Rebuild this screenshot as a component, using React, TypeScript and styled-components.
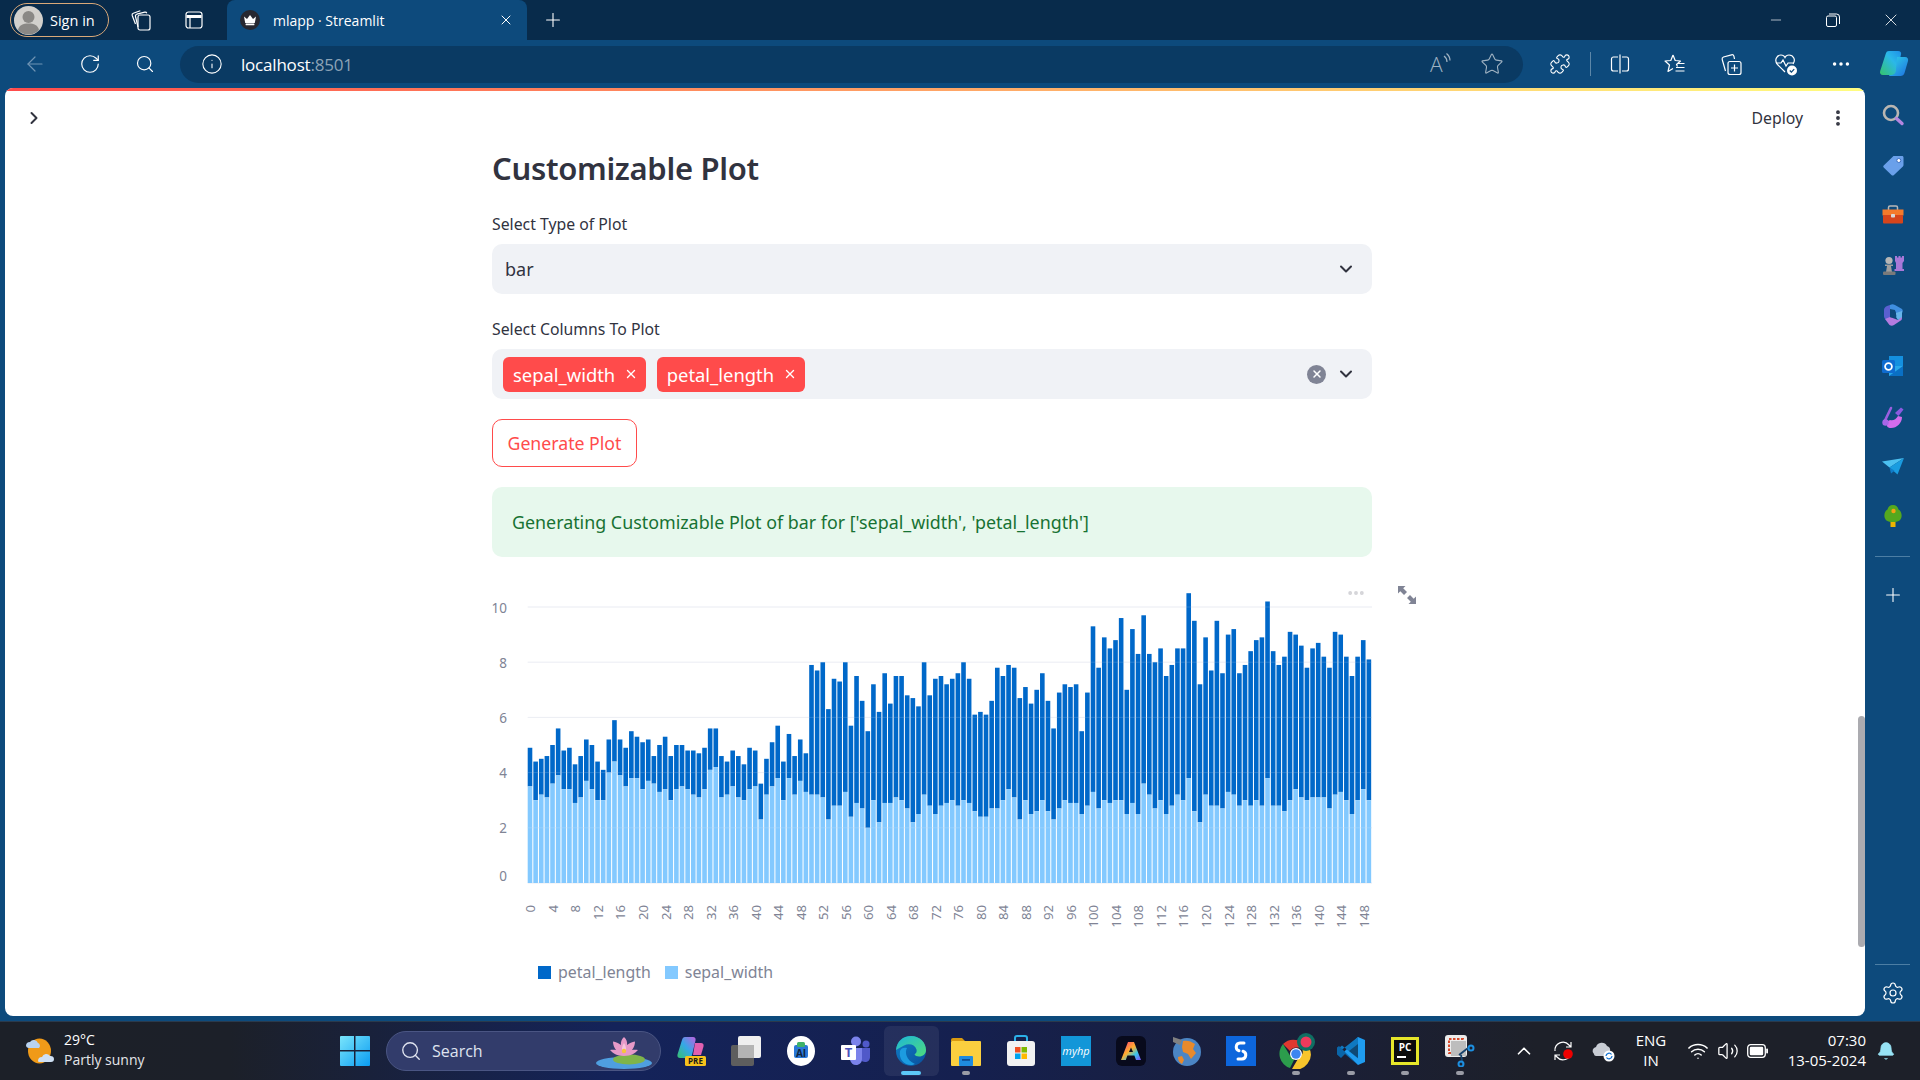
import React from 'react';
import styled, { createGlobalStyle } from 'styled-components';
import {
  ArrowLeft, RotateCw, Search, Info, Star, Puzzle, Plus, X, Minus, Ellipsis,
  ChevronDown, ChevronRight, ChevronUp, Wifi, Volume2, Bell, Settings, EllipsisVertical,
} from 'lucide-react';

// --- Data ---
const sepalWidth = [
  3.5, 3.0, 3.2, 3.1, 3.6, 3.9, 3.4, 3.4, 2.9, 3.1, 3.7, 3.4, 3.0, 3.0, 4.0, 4.4, 3.9, 3.5, 3.8, 3.8, 3.4, 3.7, 3.6, 3.3, 3.4,
  3.0, 3.4, 3.5, 3.4, 3.2, 3.1, 3.4, 4.1, 4.2, 3.1, 3.2, 3.5, 3.1, 3.0, 3.4, 3.5, 2.3, 3.2, 3.5, 3.8, 3.0, 3.8, 3.2, 3.7, 3.3,
  3.2, 3.2, 3.1, 2.3, 2.8, 2.8, 3.3, 2.4, 2.9, 2.7, 2.0, 3.0, 2.2, 2.9, 2.9, 3.1, 3.0, 2.7, 2.2, 2.5, 3.2, 2.8, 2.5, 2.8, 2.9,
  3.0, 2.8, 3.0, 2.9, 2.6, 2.4, 2.4, 2.7, 2.7, 3.0, 3.4, 3.1, 2.3, 3.0, 2.5, 2.6, 3.0, 2.6, 2.3, 2.7, 3.0, 2.9, 2.9, 2.5, 2.8,
  3.3, 2.7, 3.0, 2.9, 3.0, 3.0, 2.5, 2.9, 2.5, 3.6, 3.2, 2.7, 3.0, 2.5, 2.8, 3.2, 3.0, 3.8, 2.6, 2.2, 3.2, 2.8, 2.8, 2.7, 3.3,
  3.2, 2.8, 3.0, 2.8, 3.0, 2.8, 3.8, 2.8, 2.8, 2.6, 3.0, 3.4, 3.1, 3.0, 3.1, 3.1, 3.1, 2.7, 3.2, 3.3, 3.0, 2.5, 3.0, 3.4, 3.0,
];
const petalLength = [
  1.4, 1.4, 1.3, 1.5, 1.4, 1.7, 1.4, 1.5, 1.4, 1.5, 1.5, 1.6, 1.4, 1.1, 1.2, 1.5, 1.3, 1.4, 1.7, 1.5, 1.7, 1.5, 1.0, 1.7, 1.9,
  1.6, 1.6, 1.5, 1.4, 1.6, 1.6, 1.5, 1.5, 1.4, 1.5, 1.2, 1.3, 1.5, 1.3, 1.5, 1.3, 1.3, 1.3, 1.6, 1.9, 1.4, 1.6, 1.4, 1.5, 1.4,
  4.7, 4.5, 4.9, 4.0, 4.6, 4.5, 4.7, 3.3, 4.6, 3.9, 3.5, 4.2, 4.0, 4.7, 3.6, 4.4, 4.5, 4.1, 4.5, 3.9, 4.8, 4.0, 4.9, 4.7, 4.3,
  4.4, 4.8, 5.0, 4.5, 3.5, 3.8, 3.7, 3.9, 5.1, 4.5, 4.5, 4.7, 4.4, 4.1, 4.0, 4.4, 4.6, 4.0, 3.3, 4.2, 4.2, 4.2, 4.3, 3.0, 4.1,
  6.0, 5.1, 5.9, 5.6, 5.8, 6.6, 4.5, 6.3, 5.8, 6.1, 5.1, 5.3, 5.5, 5.0, 5.1, 5.3, 5.5, 6.7, 6.9, 5.0, 5.7, 4.9, 6.7, 4.9, 5.7,
  6.0, 4.8, 4.9, 5.6, 5.8, 6.1, 6.4, 5.6, 5.1, 5.6, 6.1, 5.6, 5.5, 4.8, 5.4, 5.6, 5.1, 5.1, 5.9, 5.7, 5.2, 5.0, 5.2, 5.4, 5.1,
];

const CHART_X0 = 35.7;
const CHART_STEP = 5.63;
const CHART_Y0 = 306;
const CHART_UNIT = 27.6;
const yTicks = [10, 8, 6, 4, 2];

// --- Global ---
const GlobalStyle = createGlobalStyle`
  html, body { margin: 0; padding: 0; }
  body { font-family: "Noto Sans", "Liberation Sans", sans-serif; }
  * { box-sizing: border-box; }
`;

// --- Browser chrome ---
const Screen = styled.div`
  width: 1920px;
  height: 1080px;
  overflow: hidden;
  display: flex;
  flex-direction: column;
  background: #0d4a7c;
`;

const TitleBar = styled.div`
  height: 40px;
  display: flex;
  align-items: center;
  background: #082b4b;
  color: #fff;
  font-family: "Open Sans", sans-serif;
  font-size: 14px;
`;

const SignIn = styled.div`
  width: 99px;
  height: 34px;
  margin-left: 10px;
  padding-left: 3px;
  display: flex;
  align-items: center;
  gap: 7px;
  border: 1px solid #d9a878;
  border-radius: 17px;
  font-size: 14.5px;
`;

const BarSlot = styled.div<{ $w?: number; $pl?: number }>`
  width: ${({ $w }) => $w ?? 55}px;
  height: 100%;
  padding-left: ${({ $pl }) => $pl ?? 0}px;
  flex: none;
  display: flex;
  align-items: center;
  justify-content: center;
  color: #fff;
`;

const TabSpacer = styled.div`
  width: 5px;
  flex: none;
`;

const Tab = styled.div`
  width: 300px;
  height: 40px;
  margin-left: 7px;
  padding: 0 13px;
  display: flex;
  align-items: center;
  background: #0d4a7c;
  border-radius: 8px 8px 0 0;
`;

const Favicon = styled.div`
  width: 20px;
  height: 20px;
  border-radius: 50%;
  background: #262730;
  display: flex;
  align-items: center;
  justify-content: center;
  flex: none;
`;

const TabTitle = styled.span`
  flex: 1;
  margin-left: 13px;
`;

const Grow = styled.div`
  flex: 1;
`;

const NavBar = styled.div`
  height: 48px;
  padding-left: 7px;
  display: flex;
  align-items: center;
`;

const AddressBar = styled.div`
  width: 1343px;
  height: 37px;
  margin-left: 8px;
  padding: 0 19px 0 21px;
  display: flex;
  align-items: center;
  gap: 26px;
  border-radius: 19px;
  background: #0a3a63;
  color: #fff;
`;

const Url = styled.div`
  flex: 1;
  margin-left: -8px;
  font-family: "Open Sans", sans-serif;
  font-size: 17px;
  letter-spacing: -0.2px;
  span { color: #8ca3b6; }
`;

const ReadAloudWrap = styled.div`
  width: 24px;
  height: 24px;
  display: flex;
  align-items: flex-start;
  flex: none;
`;

const ReadLetter = styled.span`
  height: 24px;
  font-family: "Open Sans", sans-serif;
  font-size: 21px;
  font-weight: 300;
  line-height: 25px;
  color: #9fb2c2;
`;

const NavDivider = styled.div`
  width: 1px;
  height: 24px;
  flex: none;
  margin: 0 1px 0 2px;
  background: #5d87a8;
`;

const Middle = styled.div`
  height: 928px;
  display: flex;
`;

const Page = styled.div`
  position: relative;
  width: 1860px;
  margin-left: 5px;
  overflow: hidden;
  background: #fff;
  border-radius: 8px;
  color: #31333f;
`;

const Rainbow = styled.div`
  height: 3px;
  background: linear-gradient(90deg, #ff4b4b, #fffd80);
`;

const PageHeader = styled.div`
  height: 54px;
  padding: 0 17px 0 19px;
  display: flex;
  align-items: center;
  justify-content: space-between;
`;

const HeaderActions = styled.div`
  display: flex;
  align-items: center;
  gap: 25px;
  font-size: 15.8px;
`;

const ScrollThumb = styled.div`
  position: absolute;
  top: 628px;
  right: 0;
  width: 7px;
  height: 231px;
  border-radius: 4px;
  background: #ababb0;
`;

// --- Streamlit content ---
const Main = styled.main`
  width: 880px;
  margin-left: 487px;
  display: flex;
  flex-direction: column;
  gap: 20px;
`;

const Title = styled.h1`
  margin: 0;
  height: 47px;
  font-size: 31px;
  line-height: 47px;
  font-weight: 600;
  letter-spacing: -0.32px;
`;

const Field = styled.div<{ $mb?: number }>`
  margin-bottom: ${({ $mb }) => $mb ?? 0}px;
`;

const Label = styled.div`
  height: 24px;
  margin-bottom: 8px;
  font-size: 15.8px;
  line-height: 24px;
`;

const SelectBox = styled.div<{ $pl: number }>`
  height: 50px;
  padding: 0 16px 0 ${({ $pl }) => $pl}px;
  display: flex;
  align-items: center;
  border-radius: 10px;
  background: #f0f2f6;
  font-size: 18px;
`;

const Tag = styled.div`
  height: 35px;
  margin-right: 10.5px;
  padding: 0 8px 0 10px;
  display: flex;
  align-items: center;
  gap: 9px;
  border-radius: 6px;
  background: #ff4b4b;
  color: #fff;
  font-size: 18.4px;
`;

const ClearDot = styled.div`
  width: 19px;
  height: 19px;
  margin-right: 10px;
  display: flex;
  align-items: center;
  justify-content: center;
  border-radius: 50%;
  background: #808495;
  color: #fff;
`;

const Button = styled.button`
  width: 145px;
  height: 48px;
  padding: 0;
  border: 1px solid #ff4b4b;
  border-radius: 10px;
  background: #fff;
  color: #ff4b4b;
  font-family: inherit;
  font-size: 17.7px;
`;

const Alert = styled.div`
  height: 70px;
  padding-left: 20px;
  display: flex;
  align-items: center;
  border-radius: 10px;
  background: #e7f8ed;
  color: #177233;
  font-size: 17.85px;
`;

const ChartWrap = styled.div`
  position: relative;
`;

const ChartSvg = styled.svg`
  display: block;
  font-family: "Noto Sans", sans-serif;
`;

const ChartDots = styled.div`
  position: absolute;
  top: 6px;
  left: 854px;
  color: #d4d4d8;
  display: flex;
`;

const ExpandButton = styled.div`
  position: absolute;
  top: 9px;
  left: 906px;
  display: flex;
`;

const Legend = styled.div`
  margin-left: 46px;
  display: flex;
  align-items: center;
  font-size: 15.9px;
  color: #808495;
`;

const Swatch = styled.div<{ $color: string }>`
  width: 13px;
  height: 13px;
  margin-right: 7px;
  background: ${({ $color }) => $color};
`;

const LegendName = styled.span`
  margin-right: 14px;
`;

// --- Edge sidebar ---
const SideBar = styled.div`
  width: 55px;
  padding-top: 2px;
  display: flex;
  flex-direction: column;
  align-items: center;
`;

const SideItem = styled.div<{ $h?: number }>`
  height: ${({ $h }) => $h ?? 50.1}px;
  flex: none;
  display: flex;
  align-items: center;
  justify-content: center;
  color: #fff;
`;

const SideRule = styled.div<{ $mt: number; $mb: number }>`
  width: 35px;
  height: 1px;
  margin: ${({ $mt }) => $mt}px 0 ${({ $mb }) => $mb}px;
  flex: none;
  background: #4c7ea4;
`;

// --- Taskbar ---
const Taskbar = styled.div`
  height: 59px;
  margin-top: 5px;
  padding-left: 25px;
  display: flex;
  align-items: center;
  border-top: 1px solid #2a3a4c;
  background: linear-gradient(90deg, #1c2028 0%, #1c2029 12%, #14235a 32%, #15204f 50%, #1a1f38 68%, #1d2029 80%, #1d2029 100%);
  color: #fff;
  font-family: "Open Sans", sans-serif;
  font-size: 15px;
`;

const Weather = styled.div`
  width: 315px;
  flex: none;
  display: flex;
  align-items: center;
  gap: 9px;
`;

const WeatherText = styled.div`
  padding-bottom: 3px;
  font-size: 14px;
  line-height: 20px;
  span { display: block; color: #e4e6ea; }
`;

const StartSlot = styled.div`
  width: 30px;
  flex: none;
  display: flex;
`;

const SearchPill = styled.div`
  width: 275px;
  height: 40px;
  margin: 0 3px 0 16px;
  padding: 0 8px 0 13px;
  flex: none;
  display: flex;
  align-items: center;
  border: 1px solid #4a5583;
  border-radius: 20px;
  background: #323c6b;
  font-size: 16px;
  color: #dfe3ef;
`;

const SearchLabel = styled.span`
  flex: 1;
  margin-left: 10px;
`;

const AppSlot = styled.div<{ $state?: 'dot' | 'active' }>`
  position: relative;
  width: 54.93px;
  height: 50px;
  flex: none;
  display: flex;
  align-items: center;
  justify-content: center;
  border-radius: 6px;
  background: ${({ $state }) => ($state === 'active' ? 'rgba(255,255,255,0.07)' : 'transparent')};
  &::after {
    content: '';
    display: ${({ $state }) => ($state ? 'block' : 'none')};
    position: absolute;
    bottom: 1px;
    left: 50%;
    transform: translateX(-50%);
    width: ${({ $state }) => ($state === 'active' ? 20 : 8)}px;
    height: 4px;
    border-radius: 2px;
    background: ${({ $state }) => ($state === 'active' ? '#5cc8f8' : '#9a9ca6')};
  }
`;

const Tray = styled.div`
  margin-left: auto;
  padding-right: 24px;
  display: flex;
  align-items: center;
`;

const TraySlot = styled.div<{ $w: number }>`
  width: ${({ $w }) => $w}px;
  display: flex;
  justify-content: center;
  color: #fff;
`;

const Lang = styled.div`
  width: 54px;
  padding-bottom: 2px;
  text-align: center;
  line-height: 20px;
`;

const Clock = styled.div`
  width: 93px;
  margin-right: 10px;
  padding-bottom: 2px;
  text-align: right;
  line-height: 20px;
`;

// --- Icons ---
const Avatar = () => (
  <svg width="29" height="29" viewBox="0 0 29 29">
    <circle cx="14.5" cy="14.5" r="14.5" fill="#d2d0cc" />
    <circle cx="14.5" cy="11" r="6" fill="#8a8885" />
    <path d="M4 24c1-5 5-6.5 10.5-6.5S24 19 25 24a14.5 14.5 0 0 1-21 0z" fill="#8a8885" />
  </svg>
);
const Workspaces = () => (
  <svg width="22" height="22" viewBox="0 0 22 22" fill="none" stroke="#fff" strokeWidth="1.2">
    <rect x="8" y="6" width="12" height="15" rx="2" />
    <path d="M8 18 5.5 7.5c-.3-1 .3-2 1.3-2.3l8-2c1-.2 1.7.2 2 1" />
    <path d="M5.5 15 2.2 6.5c-.3-1 .2-2 1.1-2.3l7-2.5" />
  </svg>
);
const TabsIcon = () => (
  <svg width="18" height="18" viewBox="0 0 18 18" fill="none" stroke="#fff" strokeWidth="1.2">
    <rect x="1" y="1" width="16" height="16" rx="2.5" />
    <path d="M1.5 5.5h15" strokeWidth="3" />
    <path d="M5 5v12" />
  </svg>
);
const Crown = () => (
  <svg width="14" height="12" viewBox="0 0 14 12" fill="#fff">
    <path d="M1 2.5 4 5l3-4 3 4 3-2.5-1.2 6.5H2.2z" />
    <rect x="2.6" y="9.6" width="8.8" height="1.6" rx=".5" />
  </svg>
);
const RestoreIcon = () => (
  <svg width="14" height="14" viewBox="0 0 14 14" fill="none" stroke="#fff" strokeWidth="1">
    <rect x=".5" y="3" width="10" height="10.5" rx="1.5" />
    <path d="M3 1h7.5a3 3 0 0 1 3 3v7" />
  </svg>
);
const ReadAloud = () => (
  <ReadAloudWrap>
    <ReadLetter>A</ReadLetter>
    <svg width="10" height="14" viewBox="0 0 10 14" fill="none" stroke="#9fb2c2" strokeWidth="1.2">
      <path d="M1 4c2 1.500 3 3.500 3 6M3.500 1.500c2.500 2 3.500 4.500 3.500 7" />
    </svg>
  </ReadAloudWrap>
);
const SplitIcon = () => (
  <svg width="22" height="22" viewBox="0 0 22 22" fill="none" stroke="#fff" strokeWidth="1.2">
    <path d="M9 4H4.500A2 2 0 0 0 2.500 6v10a2 2 0 0 0 2 2H9M13 4h4.500a2 2 0 0 1 2 2v10a2 2 0 0 1-2 2H13" />
    <path d="M11 1.500v19" />
  </svg>
);
const FavoritesIcon = () => (
  <svg width="24" height="24" viewBox="0 0 24 24" fill="none" stroke="#fff" strokeWidth="1.2" strokeLinejoin="round">
    <path d="M10 3l2.200 5.500 5.300.5-4 3.500 1 2M10 3 7.800 8.500 2 9l4.500 4-1.500 6.500 5-3" />
    <path d="M14 11.500h7.500M13 15.500h8.500M12.500 19h9" />
  </svg>
);
const CollectionsIcon = () => (
  <svg width="24" height="24" viewBox="0 0 24 24" fill="none" stroke="#fff" strokeWidth="1.2">
    <rect x="9" y="9.500" width="13" height="13" rx="2" />
    <path d="M15.500 12.500v7M12 16h7" />
    <path d="M6.500 19 3.200 7.500c-.3-1.100.3-2.100 1.300-2.500l8-2.200c1.100-.3 2.100.3 2.400 1.300L15.500 7" />
  </svg>
);
const HealthIcon = () => (
  <svg width="26" height="26" viewBox="0 0 26 26" fill="none" stroke="#fff" strokeWidth="1.2">
    <path d="M12 21 4.500 13.500C1 9.500 3.500 4 8 4c2 0 3.300 1 4 2.500C12.700 5 14 4 16 4c4.500 0 7 5 4 9" />
    <path d="M3 12h5l2-3 3 6 2-3h6" />
    <circle cx="19" cy="19.500" r="5" fill="#fff" stroke="none" />
    <path d="m16.800 19.500 1.600 1.600 2.800-3" stroke="#0d4a7c" strokeWidth="1.300" />
  </svg>
);
const CopilotLogo = () => (
  <svg width="32" height="32" viewBox="0 0 32 32">
    <defs>
      <linearGradient id="copA" x1="0" y1="0" x2="1" y2="1">
        <stop offset="0" stopColor="#2fd6e8" /><stop offset="1" stopColor="#1f6fe0" />
      </linearGradient>
      <linearGradient id="copB" x1="0" y1="1" x2="1" y2="0">
        <stop offset="0" stopColor="#35c46a" /><stop offset=".6" stopColor="#2bb8e8" /><stop offset="1" stopColor="#1e90e8" />
      </linearGradient>
    </defs>
    <path d="M11 3h9c2.500 0 3.500 1.500 3 3.500L19 24c-.5 2-2 3-4 3H5c-2.500 0-3.500-2-2.800-4L7.500 6.500C8.200 4 9 3 11 3z" fill="url(#copB)" />
    <path d="M19 9h8c2.500 0 3.600 2 3 4l-3.500 12c-.6 2-2 3-4 3H12c-2 0-1-1 1-1 2.500 0 4-1 4.800-3.500z" fill="url(#copA)" />
  </svg>
);

// sidebar icons
const SearchColor = () => (
  <svg width="24" height="24" viewBox="0 0 24 24" fill="none">
    <circle cx="10" cy="10" r="7" stroke="#b9b6b2" strokeWidth="2.600" />
    <path d="m15.500 15.500 5.500 5" stroke="#b486e0" strokeWidth="3.400" strokeLinecap="round" />
  </svg>
);
const TagColor = () => (
  <svg width="24" height="24" viewBox="0 0 24 24">
    <path d="M13 3h8c1 0 1.500.6 1.500 1.500V12c0 .6-.2 1-.6 1.400l-9.200 8.800c-.6.500-1.400.5-2 0l-8-7.700c-.6-.6-.6-1.500 0-2L12 3.400c.3-.2.600-.4 1-.4z" fill="#6aa0ea" />
    <circle cx="17.800" cy="7.500" r="2" fill="#fff" stroke="#3e6fc0" />
  </svg>
);
const Toolbox = () => (
  <svg width="24" height="24" viewBox="0 0 24 24">
    <path d="M7.500 7V4.500c0-1 .5-1.500 1.500-1.500h6c1 0 1.500.5 1.500 1.500V7" fill="none" stroke="#b8b8b8" strokeWidth="1.500" />
    <rect x="1.500" y="6.500" width="21" height="6" fill="#f47a2b" />
    <rect x="2" y="12" width="20" height="8.500" rx="1" fill="#d6451c" />
    <rect x="10" y="11" width="4" height="3.500" rx=".8" fill="#d8d8d8" />
  </svg>
);
const Chess = () => (
  <svg width="24" height="24" viewBox="0 0 24 24">
    <path d="M14 3h2v1.500h1.500V3h2v1.500H21V3h2v5l-1.500 2v6H23v2h-9.500v-2h1.500v-6L14 8z" fill="#a778d8" />
    <circle cx="8" cy="7.500" r="3.600" fill="#b6b6b6" />
    <path d="M4 11.500h8v1.500H10l1 6H5l1-6H4z" fill="#9e9e9e" />
    <rect x="2" y="18.500" width="12.500" height="3.500" rx="1" fill="#7a7a7a" />
  </svg>
);
const M365 = () => (
  <svg width="24" height="24" viewBox="0 0 24 24">
    <path d="M9 2c2-1 3-1 5 0l7 4c1 1 1 3 0 4l-6 1-1-4-5-1z" fill="#3f8fe0" />
    <path d="M3 7c0-2 1-3 3-4l3-1v16l-3-1c-2-1-3-2-3-4z" fill="#5a5fd0" />
    <path d="M4 16l5-2 8 3 4-5v2c0 2 0 3-2 4l-6 4c-1.500 1-3 1-4.500 0z" fill="#b47be0" />
    <path d="M15 10l6-2v6l-4 3-2-3z" fill="#66b5ea" />
    <path d="M9.500 9.500 14.500 8.500l1 5-6 1z" fill="#0d4a7c" />
  </svg>
);
const Outlook = () => (
  <svg width="24" height="24" viewBox="0 0 24 24">
    <rect x="8" y="2" width="14" height="10" fill="#1490df" />
    <path d="M8 12h14v10H8z" fill="#28a8ea" />
    <path d="m8 22 14-10v10z" fill="#0a70c4" />
    <rect x="1" y="6" width="13" height="13" rx="1.500" fill="#0f6cd0" />
    <circle cx="7.500" cy="12.500" r="3.400" fill="none" stroke="#fff" strokeWidth="1.800" />
  </svg>
);
const Brush = () => (
  <svg width="24" height="24" viewBox="0 0 24 24">
    <path d="M3.500 17.500 10 4" stroke="#9a5fe0" strokeWidth="2.600" strokeLinecap="round" />
    <path d="M6 22c-1-3 0-5 3-6 3 1 6-.5 8-4l4 1c0 6-5 11-11 11-2 0-3.500-.6-4-2z" fill="#d46cec" />
    <circle cx="4.500" cy="18.500" r="3.200" fill="#a866e8" />
    <path d="m14 9 6-5.500 2.500 2-5 6.500z" fill="#8a5ae0" />
  </svg>
);
const Plane = () => (
  <svg width="24" height="24" viewBox="0 0 24 24">
    <path d="M1 7.500 23 4 8.500 13.500z" fill="#4cc0f0" />
    <path d="M23 4 8.500 13.500l8 7z" fill="#1a9ce0" />
    <path d="m8.500 13.500 1.500 6 3.500-2.800z" fill="#0f7cc8" />
  </svg>
);
const Tree = () => (
  <svg width="24" height="24" viewBox="0 0 24 24">
    <rect x="9.500" y="17" width="5" height="6" fill="#eeb500" />
    <path d="M12 1c3 0 5 2 5.500 4.500C20 7 21 10 20.500 13c-.5 3-3 5-8.500 5s-8-2-8.500-5C3 10 4 7 6.500 5.500 7 3 9 1 12 1z" fill="#54a81e" />
    <circle cx="12.500" cy="7" r="2.200" fill="#f2a214" />
  </svg>
);

// taskbar icons
const WeatherIcon = () => (
  <svg width="30" height="30" viewBox="0 0 30 30">
    <ellipse cx="14.500" cy="15" rx="11.500" ry="12.500" fill="#f09a18" />
    <path d="M1 10a4 4 0 0 1 4-4 4.500 4.500 0 0 1 8 1 3 3 0 0 1 1 5H4a3 3 0 0 1-3-2z" fill="#b8d2f0" />
    <path d="M13 25a4 4 0 0 1 4-4 4.500 4.500 0 0 1 8-1 3.200 3.200 0 0 1 4 3c0 2-1 3-3 3H15c-1.500 0-2-.5-2-1z" fill="#cfe0f4" />
  </svg>
);
const StartLogo = () => (
  <svg width="30" height="30" viewBox="0 0 30 30">
    <defs>
      <linearGradient id="winA" x1="0" y1="0" x2="1" y2="1">
        <stop offset="0" stopColor="#7ae5fb" /><stop offset="1" stopColor="#0a9cf2" />
      </linearGradient>
    </defs>
    <path d="M0 1a1 1 0 0 1 1-1h13v14H0zM15.500 0H29a1 1 0 0 1 1 1v13H15.500zM0 15.500h14V30H1a1 1 0 0 1-1-1zM15.500 15.500H30V29a1 1 0 0 1-1 1H15.500z" fill="url(#winA)" />
  </svg>
);
const Lotus = () => (
  <svg width="56" height="36" viewBox="0 0 56 36">
    <ellipse cx="28" cy="30" rx="28" ry="6" fill="#4f9fe0" />
    <ellipse cx="33" cy="26.500" rx="16" ry="5" fill="#7fb44a" />
    <path d="M28 4c2.500 2 3.500 5 3 8 2.500-2 5-3 8-3.500 0 3-1 6-3 8.500 2-.5 4-.5 6 0-2.500 3-7 6-14 6s-11.500-3-14-6c2-.5 4-.5 6 0-2-2.500-3-5.500-3-8.500 3 .5 5.500 1.500 8 3.500-.5-3 .5-6 3-8z" fill="#e79ac8" />
    <path d="M28 10c1.800 2.500 2.500 6 1.800 9h-3.600c-.7-3 0-6.500 1.800-9z" fill="#f5c6dc" />
    <circle cx="28" cy="18" r="2.200" fill="#f6c43c" />
  </svg>
);
const CopilotPre = () => (
  <svg width="32" height="32" viewBox="0 0 32 32">
    <defs>
      <linearGradient id="copT" x1="0" y1="1" x2="1" y2="0">
        <stop offset="0" stopColor="#36c06e" /><stop offset=".5" stopColor="#35a8e8" /><stop offset="1" stopColor="#c05fe0" />
      </linearGradient>
    </defs>
    <path d="M10 2h8c2 0 3 1.500 2.500 3.500L17 20c-.5 2-2 3-4 3H5c-2 0-3-1.500-2.500-3.500L7 5c.5-2 1.500-3 3-3z" fill="url(#copT)" />
    <path d="M20 8h6c2 0 3 1.500 2.500 3.500L26 20h-8z" fill="#e060b0" />
    <rect x="10" y="21" width="21" height="10" rx="1.500" fill="#f6c21c" />
    <text x="20.500" y="29" fontSize="8" fontWeight="700" textAnchor="middle" fill="#1a1a1a" fontFamily="Open Sans, sans-serif">PRE</text>
  </svg>
);
const TaskView = () => (
  <svg width="32" height="32" viewBox="0 0 32 32">
    <rect x="1" y="10" width="23" height="21" rx="2" fill="#5e5e5e" />
    <rect x="8" y="1" width="23" height="22" rx="2" fill="#efefef" />
    <rect x="8" y="10" width="16" height="13" fill="#b4b4b4" />
  </svg>
);
const AiCircle = () => (
  <svg width="28" height="30" viewBox="0 0 28 30">
    <ellipse cx="14" cy="15" rx="14" ry="15" fill="#fff" />
    <rect x="7" y="9" width="14" height="13" rx="2" fill="#2a78d8" />
    <rect x="10" y="6" width="8" height="5" rx="1.500" fill="#3fb26a" />
    <text x="14" y="20.500" fontSize="10" fontWeight="700" textAnchor="middle" fill="#10243e" fontFamily="Open Sans, sans-serif">AI</text>
  </svg>
);
const Teams = () => (
  <svg width="30" height="30" viewBox="0 0 30 30">
    <circle cx="15" cy="5.500" r="5" fill="#7b83eb" />
    <circle cx="25" cy="8" r="3.500" fill="#5059c9" />
    <path d="M20 12h9v9c0 3-2 5-5 5-2 0-3-1-4-2z" fill="#5059c9" />
    <path d="M9 12h12v11c0 3.500-2.500 6-6 6-3 0-5-2-6-5z" fill="#7b83eb" />
    <rect x="0" y="9" width="15" height="15" rx="1" fill="#fff" />
    <text x="7.500" y="21" fontSize="13" fontWeight="700" textAnchor="middle" fill="#4b53bc" fontFamily="Open Sans, sans-serif">T</text>
  </svg>
);
const EdgeLogo = () => (
  <svg width="32" height="32" viewBox="0 0 32 32">
    <defs>
      <linearGradient id="edgeG" x1="0" y1="0" x2="1" y2="1">
        <stop offset="0" stopColor="#1db5d8" /><stop offset="1" stopColor="#4fdc7c" />
      </linearGradient>
      <linearGradient id="edgeB" x1="0" y1="0" x2="1" y2="1">
        <stop offset="0" stopColor="#0f7fc8" /><stop offset="1" stopColor="#0a4f9c" />
      </linearGradient>
    </defs>
    <circle cx="16" cy="16" r="15" fill="url(#edgeB)" />
    <path d="M1 15C2 6 8 1 16 1c9 0 15 6.500 15 14 0 4-3 6.500-7 6.500-2 0-4-.8-4.500-2 2-1.500 2.500-3 2-5C20 9.500 14 8 9 10.500 5 12.500 2.500 14 1 15z" fill="url(#edgeG)" />
    <path d="M12 13c-2.500 4-1 12 8 16-1 .5-2.500 1-4 1C9 30 3.500 24 5 16c1-3 4-4 7-3z" fill="#1c9be0" />
  </svg>
);
const Explorer = () => (
  <svg width="32" height="32" viewBox="0 0 32 32">
    <path d="M1 5a2 2 0 0 1 2-2h9l3 3h-14z" fill="#d99a10" />
    <rect x="1" y="6" width="30" height="25" rx="1" fill="#fbcf3f" />
    <rect x="9" y="21" width="14" height="10" rx="1" fill="#1f8be0" />
    <rect x="12" y="24" width="8" height="1.800" fill="#0f4f94" />
  </svg>
);
const StoreLogo = () => (
  <svg width="30" height="32" viewBox="0 0 30 32">
    <path d="M9 6V3a2 2 0 0 1 2-2h8a2 2 0 0 1 2 2v3" fill="none" stroke="#2bb0e8" strokeWidth="2" />
    <rect x="1" y="6" width="28" height="25" rx="3" fill="#f2f2f2" />
    <rect x="9" y="12" width="5.500" height="5.500" fill="#f25022" />
    <rect x="15.500" y="12" width="5.500" height="5.500" fill="#7fba00" />
    <rect x="9" y="18.500" width="5.500" height="5.500" fill="#00a4ef" />
    <rect x="15.500" y="18.500" width="5.500" height="5.500" fill="#ffb900" />
  </svg>
);
const MyHp = () => (
  <svg width="30" height="30" viewBox="0 0 30 30">
    <rect width="30" height="30" fill="#1296d8" />
    <text x="15" y="19" fontSize="11" fontStyle="italic" textAnchor="middle" fill="#fff" fontFamily="Open Sans, sans-serif">myhp</text>
  </svg>
);
const AdobeExpress = () => (
  <svg width="30" height="30" viewBox="0 0 30 30">
    <defs>
      <linearGradient id="adobeG" x1="0" y1="0" x2="1" y2="1">
        <stop offset="0" stopColor="#ff2f7a" /><stop offset=".45" stopColor="#ffb02e" /><stop offset=".7" stopColor="#38c8e8" /><stop offset="1" stopColor="#7c4dff" />
      </linearGradient>
    </defs>
    <rect width="30" height="30" rx="6" fill="#080a1c" />
    <path d="M12 6h6l7 18h-5l-1.600-4.500h-7L9.800 24H5z" fill="url(#adobeG)" />
    <path d="M15 11.500 13 16h4z" fill="#080a1c" />
  </svg>
);
const GlobeApp = () => (
  <svg width="30" height="32" viewBox="0 0 30 32">
    <circle cx="16" cy="17" r="14" fill="#4b85c4" />
    <path d="M12 6c4-1 8 0 12 3l-2 5 3 4-5 6-3-5-5-2-1-5zM7 22l4-1 2 4-2 4c-2-1-4-3-4-7z" fill="#e88a2c" />
    <path d="M2 2l9 3-2 5-7-3z" fill="#808080" />
  </svg>
);
const SApp = () => (
  <svg width="30" height="30" viewBox="0 0 30 30">
    <rect width="30" height="30" fill="#0d66dc" />
    <path d="M18 7h-4a4 4 0 0 0-1 7.800" fill="none" stroke="#fff" strokeWidth="3" strokeLinecap="round" />
    <path d="M12 23h4a4 4 0 0 0 1-7.800" fill="none" stroke="#fff" strokeWidth="3" strokeLinecap="round" />
  </svg>
);
const ChromeWithBadge = () => (
  <svg width="40" height="36" viewBox="-4 0 40 36">
    <path d="M16 7a15 15 0 0 1 13 7.500H16a7 7 0 0 0-6 3.500L3 11A15 15 0 0 1 16 7z" fill="#e0392f" />
    <path d="M3 11l7 11.500a7 7 0 0 0 6 .5L10 35A15 15 0 0 1 3 11z" fill="#2c9c4c" />
    <path d="M29 14.500A15 15 0 0 1 12 36l6.500-11a7 7 0 0 0 3-10.500z" fill="#f8c52c" />
    <circle cx="16" cy="21" r="6" fill="#fff" />
    <circle cx="16" cy="21" r="4.800" fill="#3d86f0" />
    <circle cx="26" cy="9" r="9" fill="#0f6f63" />
    <circle cx="26" cy="9" r="5.500" fill="#ee3a5c" />
  </svg>
);
const VsCode = () => (
  <svg width="30" height="30" viewBox="0 0 30 30">
    <path d="M22 1 29 4v22l-7 3L8 16z" fill="#1f9cf0" />
    <path d="M22 1 3 16l-2-1.500v-1L6 9.500l16 13z" fill="#0f78c0" />
    <path d="M22 29 3 10 1 11.500v7l4 3.500 4-4z" fill="#0a65a8" />
    <path d="M22 8v14l-9-7z" fill="#0d2a44" opacity=".6" />
  </svg>
);
const PyCharm = () => (
  <svg width="28" height="28" viewBox="0 0 28 28">
    <rect width="28" height="28" fill="#e6e62a" />
    <rect x="3" y="3" width="22" height="22" fill="#0c0c0c" />
    <text x="14" y="14" fontSize="10" fontWeight="700" textAnchor="middle" fill="#fff" fontFamily="Open Sans, sans-serif">PC</text>
    <rect x="6" y="19" width="9" height="2" fill="#fff" />
  </svg>
);
const SnipTool = () => (
  <svg width="30" height="32" viewBox="0 0 30 32">
    <rect x="0" y="0" width="22" height="22" rx="3" fill="#ececec" />
    <rect x="4" y="4" width="14" height="14" fill="none" stroke="#d8492a" strokeWidth="2" strokeDasharray="2.500 1.500" />
    <rect x="6" y="6" width="15" height="15" fill="#bdbdbd" />
    <path d="m14 20 9-7M18 30l-2-10" stroke="#17416b" strokeWidth="1.800" />
    <circle cx="26" cy="13" r="2.500" fill="none" stroke="#1d8fe0" strokeWidth="2" />
    <circle cx="16" cy="29" r="2.500" fill="none" stroke="#1d8fe0" strokeWidth="2" />
  </svg>
);
const SyncRecording = () => (
  <svg width="24" height="24" viewBox="0 0 24 24" fill="none" stroke="#fff" strokeWidth="1.200">
    <path d="M3 12a8 8 0 0 1 14-6l2 2M19 3v5h-5" />
    <path d="M19 14a8 8 0 0 1-14 4l-2-2M3 21v-5h5" />
    <circle cx="16" cy="15" r="4.800" fill="#ee0000" stroke="none" />
  </svg>
);
const CloudSync = () => (
  <svg width="24" height="24" viewBox="0 0 24 24">
    <path d="M2 15a4 4 0 0 1 2-7 6 6 0 0 1 11-1 4 4 0 0 1 3 5l-4 5H4c-1 0-2-1-2-2z" fill="#c8ccd4" />
    <circle cx="17" cy="17" r="5.500" fill="#fff" />
    <path d="M14 17a3 3 0 0 1 5.500-1.500M20 17a3 3 0 0 1-5.500 1.500" fill="none" stroke="#1474d4" strokeWidth="1.300" />
  </svg>
);
const BatteryIcon = () => (
  <svg width="22" height="14" viewBox="0 0 22 14">
    <rect x=".7" y=".7" width="17.600" height="12.600" rx="3" fill="none" stroke="#fff" strokeWidth="1.300" />
    <rect x="2.800" y="2.800" width="13.400" height="8.400" rx="1.300" fill="#fff" />
    <rect x="19.200" y="4.500" width="1.800" height="5" rx=".8" fill="#fff" />
  </svg>
);
const BellFilled = () => <Bell size={20} fill="#97e3f5" color="#97e3f5" strokeWidth={1} />;
const ExpandIcon = () => (
  <svg width="18" height="18" viewBox="0 0 18 18" fill="#808495">
    <path d="M0 0h7.500L5.200 2.300 9 6 6 9 2.300 5.200 0 7.500zM18 18h-7.500l2.300-2.300L9 12l3-3 3.700 3.800 2.300-2.300z" />
  </svg>
);

// --- Chart ---
function BarChart() {
  const yOf = (v: number) => CHART_Y0 - v * CHART_UNIT;
  const yLabelPos = (v: number) => (v === 0 ? CHART_Y0 - 7 : yOf(v) + 0.5);
  return (
    <ChartSvg width="880" height="384" viewBox="0 0 880 384">
      {[...yTicks, 0].map((v) => (
        <line key={v} x1={CHART_X0} x2="880" y1={yOf(v)} y2={yOf(v)} stroke="#e9ebf2" strokeWidth="1" />
      ))}
      {sepalWidth.map((sw, i) => {
        const x = CHART_X0 + i * CHART_STEP;
        const total = sw + petalLength[i];
        return (
          <g key={i}>
            <rect x={x} y={yOf(total)} width="4.6" height={(total - sw) * CHART_UNIT} fill="#0068c9" />
            <rect x={x} y={yOf(sw)} width="4.6" height={sw * CHART_UNIT} fill="#83c9ff" />
          </g>
        );
      })}
      {yTicks.map((v) => (
        <line key={v} x1={CHART_X0} x2="880" y1={yOf(v)} y2={yOf(v)} stroke="#ffffff" strokeOpacity="0.15" strokeWidth="1" />
      ))}
      {[...yTicks, 0].map((v) => (
        <text key={v} x="15" y={yLabelPos(v) + 5} textAnchor="end" fontSize="13.500" fill="#808495">{v}</text>
      ))}
      {sepalWidth.map((_, i) =>
        i % 4 === 0 ? (
          <text
            key={i}
            transform={`translate(${CHART_X0 + i * CHART_STEP + 7.7},328) rotate(-90)`}
            textAnchor="end"
            fontSize="13.200"
            fill="#808495"
          >
            {i}
          </text>
        ) : null,
      )}
    </ChartSvg>
  );
}

const apps: { icon: React.ReactNode; state?: 'dot' | 'active' }[] = [
  { icon: <CopilotPre /> },
  { icon: <TaskView /> },
  { icon: <AiCircle /> },
  { icon: <Teams /> },
  { icon: <EdgeLogo />, state: 'active' },
  { icon: <Explorer />, state: 'dot' },
  { icon: <StoreLogo /> },
  { icon: <MyHp /> },
  { icon: <AdobeExpress /> },
  { icon: <GlobeApp /> },
  { icon: <SApp /> },
  { icon: <ChromeWithBadge />, state: 'dot' },
  { icon: <VsCode />, state: 'dot' },
  { icon: <PyCharm />, state: 'dot' },
  { icon: <SnipTool />, state: 'dot' },
];

const sideIcons = [
  <SearchColor />, <TagColor />, <Toolbox />, <Chess />, <M365 />, <Outlook />, <Brush />, <Plane />, <Tree />,
];

export default function App() {
  return (
    <Screen>
      <GlobalStyle />
      <TitleBar>
        <SignIn>
          <Avatar />
          Sign in
        </SignIn>
        <TabSpacer />
        <BarSlot $w={53}><Workspaces /></BarSlot>
        <BarSlot $w={53}><TabsIcon /></BarSlot>
        <Tab>
          <Favicon><Crown /></Favicon>
          <TabTitle>mlapp · Streamlit</TabTitle>
          <X size={16} strokeWidth={1.5} />
        </Tab>
        <BarSlot $w={52}><Plus size={22} strokeWidth={1.2} /></BarSlot>
        <Grow />
        <BarSlot $w={57}><Minus size={16} strokeWidth={1} /></BarSlot>
        <BarSlot $w={58}><RestoreIcon /></BarSlot>
        <BarSlot $w={58}><X size={20} strokeWidth={1} /></BarSlot>
      </TitleBar>

      <NavBar>
        <BarSlot><ArrowLeft size={24} strokeWidth={1.2} color="#6f94b3" /></BarSlot>
        <BarSlot><RotateCw size={22} strokeWidth={1.3} /></BarSlot>
        <BarSlot><Search size={20} strokeWidth={1.4} /></BarSlot>
        <AddressBar>
          <Info size={22} strokeWidth={1.2} />
          <Url>localhost<span>:8501</span></Url>
          <ReadAloud />
          <Star size={24} strokeWidth={1.1} color="#9fb2c2" />
        </AddressBar>
        <BarSlot $w={65} $pl={8}><Puzzle size={22} strokeWidth={1.2} /></BarSlot>
        <NavDivider />
        <BarSlot $w={55}><SplitIcon /></BarSlot>
        <BarSlot $w={56}><FavoritesIcon /></BarSlot>
        <BarSlot $w={55}><CollectionsIcon /></BarSlot>
        <BarSlot $w={55}><HealthIcon /></BarSlot>
        <BarSlot $w={55}><Ellipsis size={22} strokeWidth={1.8} /></BarSlot>
        <BarSlot $w={51}><CopilotLogo /></BarSlot>
      </NavBar>

      <Middle>
        <Page>
          <Rainbow />
          <PageHeader>
            <ChevronRight size={20} strokeWidth={2.4} />
            <HeaderActions>
              Deploy
              <EllipsisVertical size={20} strokeWidth={2.6} />
            </HeaderActions>
          </PageHeader>
          <Main>
            <Title>Customizable Plot</Title>
            <Field $mb={3}>
              <Label>Select Type of Plot</Label>
              <SelectBox $pl={13}>
                bar
                <Grow />
                <ChevronDown size={20} strokeWidth={2.4} />
              </SelectBox>
            </Field>
            <Field>
              <Label>Select Columns To Plot</Label>
              <SelectBox $pl={11}>
                <Tag>sepal_width <X size={14} strokeWidth={2.4} /></Tag>
                <Tag>petal_length <X size={14} strokeWidth={2.4} /></Tag>
                <Grow />
                <ClearDot><X size={12} strokeWidth={3} /></ClearDot>
                <ChevronDown size={20} strokeWidth={2.4} />
              </SelectBox>
            </Field>
            <Button>Generate Plot</Button>
            <Alert>Generating Customizable Plot of bar for ['sepal_width', 'petal_length']</Alert>
            <ChartWrap>
              <BarChart />
              <ChartDots><Ellipsis size={20} strokeWidth={2.6} /></ChartDots>
              <ExpandButton><ExpandIcon /></ExpandButton>
              <Legend>
                <Swatch $color="#0068c9" />
                <LegendName>petal_length</LegendName>
                <Swatch $color="#83c9ff" />
                <LegendName>sepal_width</LegendName>
              </Legend>
            </ChartWrap>
          </Main>
          <ScrollThumb />
        </Page>
        <SideBar>
          {sideIcons.map((icon, i) => (
            <SideItem key={i}>{icon}</SideItem>
          ))}
          <SideRule $mt={15} $mb={13} />
          <SideItem><Plus size={22} strokeWidth={1.2} /></SideItem>
          <Grow />
          <SideRule $mt={0} $mb={5} />
          <SideItem $h={46}><Settings size={24} strokeWidth={1.2} /></SideItem>
        </SideBar>
      </Middle>

      <Taskbar>
        <Weather>
          <WeatherIcon />
          <WeatherText>
            29°C
            <span>Partly sunny</span>
          </WeatherText>
        </Weather>
        <StartSlot><StartLogo /></StartSlot>
        <SearchPill>
          <Search size={22} strokeWidth={1.5} />
          <SearchLabel>Search</SearchLabel>
          <Lotus />
        </SearchPill>
        {apps.map((app, i) => (
          <AppSlot key={i} $state={app.state}>{app.icon}</AppSlot>
        ))}
        <Tray>
          <TraySlot $w={40}><ChevronUp size={22} strokeWidth={1.8} /></TraySlot>
          <TraySlot $w={40}><SyncRecording /></TraySlot>
          <TraySlot $w={40}><CloudSync /></TraySlot>
          <Lang>ENG<br />IN</Lang>
          <TraySlot $w={5} />
          <TraySlot $w={30}><Wifi size={22} strokeWidth={1.6} /></TraySlot>
          <TraySlot $w={30}><Volume2 size={22} strokeWidth={1.4} /></TraySlot>
          <TraySlot $w={30}><BatteryIcon /></TraySlot>
          <Clock>07:30<br />13-05-2024</Clock>
          <BellFilled />
        </Tray>
      </Taskbar>
    </Screen>
  );
}
